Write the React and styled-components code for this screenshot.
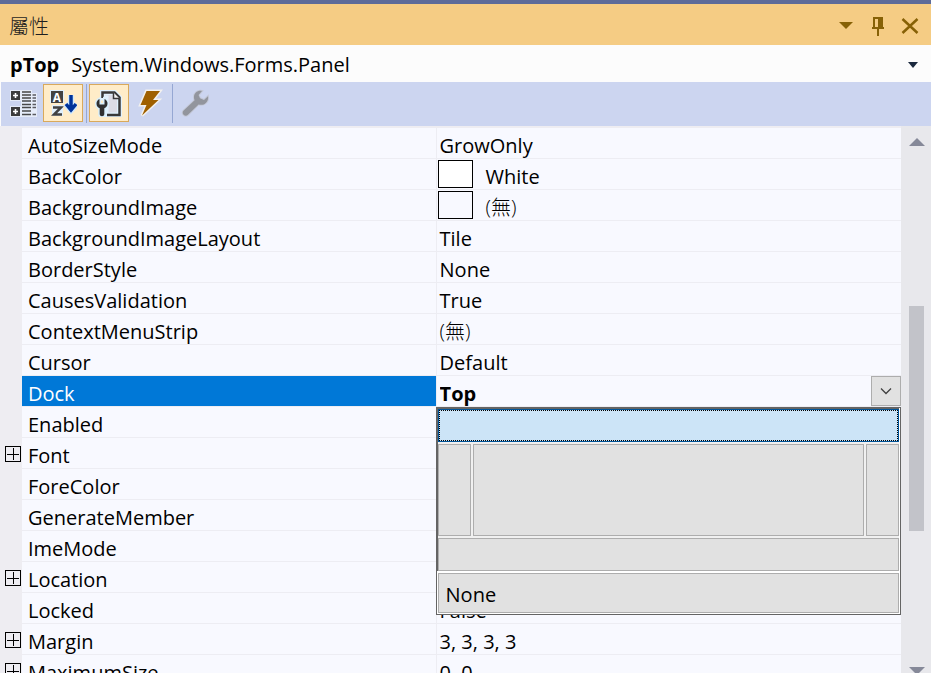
import React, { useState } from 'react';
import styled, { createGlobalStyle } from 'styled-components';

const GlobalStyle = createGlobalStyle`
  * { box-sizing: border-box; }
  body {
    margin: 0;
    overflow: hidden;
    color: #000;
    font-family: 'Open Sans', 'Noto Sans CJK TC', sans-serif;
    font-size: 20px;
    line-height: 30px;
  }
  button, input { font: inherit; color: inherit; }
`;

const Panel = styled.main`
  display: flex;
  flex-direction: column;
  height: 100vh;
  background: #fcfcfc;
  border-top: 4px solid #5d6b99;
`;

const TitleBar = styled.header`
  display: flex;
  align-items: center;
  height: 41px;
  flex: none;
  padding: 2px 9px 0;
  background: #f5cc84;
`;

const Title = styled.h1`
  flex: 1;
  margin: 0;
  padding-top: 2px;
  font-size: 20px;
  font-weight: 300;
  color: #1e1e1e;
`;

const PlainButton = styled.button`
  display: flex;
  align-items: center;
  justify-content: center;
  padding: 0;
  border: 0;
  background: transparent;
`;

const TitleButton = styled(PlainButton)`
  width: 32px;
  height: 32px;
  &:last-child { width: 24px; margin-left: 4px; }
`;

const ObjectPicker = styled(PlainButton)`
  flex: none;
  height: 37px;
  padding: 2px 13px 0 10px;
  gap: 12px;
  justify-content: flex-start;
  svg { margin-left: auto; }
`;

const Toolbar = styled.div`
  display: flex;
  align-items: center;
  flex: none;
  height: 44px;
  margin-left: 1px;
  padding: 0 2px 2px;
  background: #ccd5f0;
`;

const ToolButton = styled(PlainButton)`
  width: 40px;
  height: 38px;
  border: 1px solid ${(p) => (p['aria-pressed'] ? '#d9a95b' : 'transparent')};
  background: ${(p) => (p['aria-pressed'] ? '#ffecc8' : 'transparent')};
`;

const Separator = styled.span`
  width: 1px;
  height: 39px;
  margin: 0 2px 0 3px;
  background: #95a7d3;
`;

const Body = styled.div`
  display: flex;
  flex: 1;
  min-height: 0;
`;

const GridArea = styled.div`
  flex: 1;
  min-width: 0;
  overflow: hidden;
  padding-top: 2px;
  background: #eeedf2;
`;

const Table = styled.table`
  width: 100%;
  table-layout: fixed;
  border-collapse: separate;
  border-spacing: 0;
`;

const GutterCol = styled.col` width: 22px; `;
const NameCol = styled.col` width: 45.9%; `;

const Gutter = styled.td`
  height: 31px;
  padding: 0 2px 0 5px;
  background: #eeedf2;
`;

const Name = styled.th`
  height: 31px;
  padding: 6px 0 0 6px;
  white-space: nowrap;
  text-align: left;
  font-weight: 400;
  line-height: 24px;
  color: ${(p) => (p.$selected ? '#fff' : '#000')};
  background: ${(p) => (p.$selected ? '#0078d7' : '#f8f9ff')};
  background-clip: padding-box;
  border-bottom: 1px solid #ededf3;
`;

const Value = styled.td`
  position: relative;
  height: 31px;
  padding: 0;
  background: #f8f9ff;
  border-left: 1px solid #ededf3;
  border-bottom: 1px solid #ededf3;
`;

const ValueContent = styled.div`
  display: flex;
  height: 30px;
  padding-left: ${(p) => (p.$swatch ? '1px' : '3px')};
`;

const ValueText = styled.span`
  padding-top: 6px;
  line-height: 24px;
  font-weight: ${(p) => (p.$light ? 300 : 400)};
`;

const Swatch = styled.span`
  width: 35px;
  height: 28px;
  margin: 1px 13px 0 0;
  border: 1px solid #000;
  background: ${(p) => p.$color};
`;

const ValueInput = styled.input`
  flex: 1;
  min-width: 0;
  height: 30px;
  padding: 5px 0 0;
  border: 0;
  outline: 0;
  background: transparent;
  font-weight: 700;
  line-height: 24px;
`;

const DropButton = styled(PlainButton)`
  width: 30px;
  height: 30px;
  border: 1px solid #adadad;
  background: #e1e1e1;
`;

const Expander = styled(PlainButton)`
  width: 16px;
  height: 30px;
`;

const DockPopup = styled.div`
  position: absolute;
  z-index: 2;
  top: 100%;
  left: -1px;
  right: 0;
  margin-top: 1px;
  padding: 0 1px 1px 0;
  border: 1px solid #646464;
  background: #fff;
`;

const DockEdges = styled.div`
  display: grid;
  grid-template-columns: 33px 1fr 33px;
  grid-template-rows: 33px 92px 33px;
  gap: 2px;
  border: solid #646464;
  border-width: 1px 0 0 1px;
  background: #f0f0f0;
`;

const DockButton = styled.button`
  padding: 0;
  border: 1px solid ${(p) => (p.$active ? '#005499' : '#adadad')};
  background: ${(p) => (p.$active ? '#cce4f7' : '#e1e1e1')};
  outline: ${(p) => (p.$active ? '1px dotted #000' : 'none')};
  outline-offset: -2px;
  grid-column: ${(p) => (p.$wide ? '1 / -1' : 'auto')};
`;

const NoneButton = styled(DockButton)`
  display: block;
  width: calc(100% - 1px);
  height: 40px;
  margin: 2px 0 0 1px;
  padding: 3px 0 0 7px;
  text-align: left;
`;

const ScrollBar = styled.div`
  display: flex;
  flex-direction: column;
  align-items: center;
  width: 30px;
  padding: 12px 0 0 1px;
  overflow: hidden;
  background: #e8e8ec;
`;

const ScrollArrow = styled(PlainButton)`
  flex: none;
  align-items: flex-start;
  width: 16px;
  height: ${(p) => (p.$down ? '6px' : '8px')};
`;

const Track = styled.div` flex: ${(p) => p.$grow} 0 0; `;

const Thumb = styled(Track)`
  width: 15px;
  background: #c2c3c9;
`;

const wrenchPath =
  'M27 7.2 23 11 19 9.2 17.6 6 21 2C17 .8 12.8 4 13 8.4c0 1.2.2 1.8.6 2.8L2.6 21.6c-2.8 3 1.6 6.8 4.4 4.2L17.6 15.4c5.4 1.8 10.4-2.6 9.4-8.2Z';

const CategorizedIcon = () => (
  <svg width="28" height="28" viewBox="0 0 28 28">
    <path d="M1 1h11v11H1zM1 17h11v11H1zM12 1h11v3h5v24H12z" fill="#e6ecf9" />
    <path d="M2 2h9v9H2zM2 18h9v9H2z" fill="#3c3c3c" />
    <path d="M6.500 4v5M4 6.500h5M6.500 20v5M4 22.500h5" stroke="#fff" strokeWidth="1.600" fill="none" />
    <path
      d="M13 3h9M13 6h9M13 9h9M13 12h9M13 15.500h9M13 18.500h9M13 22h9M13 25.500h9"
      stroke="#484848"
      strokeWidth="1.600"
    />
    <path
      d="M23.500 6h3.500M23.500 9h3.500M23.500 12h3.500M23.500 15.500h3.500M23.500 18.500h3.500M23.500 25.500h3.500"
      stroke="#5a5a60"
      strokeWidth="1.600"
    />
  </svg>
);

const SortIcon = () => (
  <svg width="28" height="28" viewBox="0 0 28 28">
    <path d="M1 1h14v13H1zM3 16h11v11H3z" fill="#e0effc" />
    <path d="M2 2h12v12H2z" fill="#424242" />
    <text x="8" y="12.500" textAnchor="middle" fontFamily="Open Sans" fontSize="12" fontWeight="700" fill="#fff">A</text>
    <path d="M4 18.500h8L5 25.500h8" fill="none" stroke="#424242" strokeWidth="2.500" />
    <path d="M22 6v15M16.500 15l5.500 6 5.500-6" fill="none" stroke="#cfe9ff" strokeWidth="6" />
    <path d="M22 6v16M17 15l5 6 5-6" fill="none" stroke="#00339a" strokeWidth="3.500" />
  </svg>
);

const PageIcon = () => (
  <svg width="28" height="28" viewBox="0 0 28 28">
    <path d="M7.500 3.500H19.500l5 5V26H11V9H7.500z" fill="#dcdce6" stroke="#e0f1fd" strokeWidth="5" />
    <path d="M7.500 9V3.500H19.500l5 5V26H12" fill="none" stroke="#383838" strokeWidth="2.500" />
    <path d="M18.500 3.500v6H24.500" fill="#f5f5f5" stroke="#383838" strokeWidth="1.500" />
    <path
      d="M4.500 10C2.500 11 1.500 12.500 1.500 14.500c0 2.500 1.200 4 3.200 4.800V25c0 3 4.600 3 4.600 0v-5.700c2-.8 3.200-2.300 3.200-4.800 0-2-1-3.500-3-4.500v5.500h-5z"
      fill="#303030"
      stroke="#d9effc"
      strokeWidth="3"
      paintOrder="stroke"
    />
  </svg>
);

const EventsIcon = () => (
  <svg width="28" height="28" viewBox="0 0 28 28">
    <path
      d="M11.500 2H25l-7 9h5.500L7 26.500 11.500 16H5.500Z"
      fill="#9f6000"
      stroke="#f3f1ee"
      strokeWidth="3"
      paintOrder="stroke"
    />
  </svg>
);

const WrenchIcon = () => (
  <svg width="28" height="28" viewBox="0 0 28 28">
    <path d={wrenchPath} fill="#92959d" stroke="#c4c9d8" strokeWidth="2" paintOrder="stroke" />
  </svg>
);

const Caret = ({ width, height, color, up }) => (
  <svg width={width} height={height} viewBox="0 0 14 7" preserveAspectRatio="none">
    <path d={up ? 'M0 7 7 0l7 7Z' : 'M0 0h14L7 7Z'} fill={color} />
  </svg>
);

const PinIcon = () => (
  <svg width="12" height="20" viewBox="0 0 12 20" shapeRendering="crispEdges">
    <path d="M1 1h10v10h1v2H7v7H5v-7H0v-2h1zM3 3v8h3V3z" fill="#876106" fillRule="evenodd" />
  </svg>
);

const CloseIcon = () => (
  <svg width="18" height="16" viewBox="0 0 18 16">
    <path d="M1.500 1 16.500 15M16.500 1 1.500 15" stroke="#876106" strokeWidth="2.500" />
  </svg>
);

const ChevronIcon = () => (
  <svg width="12" height="8" viewBox="0 0 12 8">
    <path d="M1 1.500 6 6.500 11 1.500" fill="none" stroke="#404040" strokeWidth="1.300" />
  </svg>
);

const PlusBox = () => (
  <svg width="16" height="16" viewBox="0 0 16 16" shapeRendering="crispEdges">
    <path d="M.5.5h15v15H.5zM2 8.500h12M8.500 2v12" fill="none" stroke="#000" />
  </svg>
);

const properties = [
  { name: 'AutoSizeMode', value: 'GrowOnly' },
  { name: 'BackColor', value: 'White', swatch: '#fff' },
  { name: 'BackgroundImage', value: '(無)', swatch: 'transparent', light: true },
  { name: 'BackgroundImageLayout', value: 'Tile' },
  { name: 'BorderStyle', value: 'None' },
  { name: 'CausesValidation', value: 'True' },
  { name: 'ContextMenuStrip', value: '(無)', light: true },
  { name: 'Cursor', value: 'Default' },
  { name: 'Dock', editor: true },
  { name: 'Enabled' },
  { name: 'Font', expandable: true },
  { name: 'ForeColor' },
  { name: 'GenerateMember' },
  { name: 'ImeMode' },
  { name: 'Location', expandable: true },
  { name: 'Locked', value: 'False' },
  { name: 'Margin', value: '3, 3, 3, 3', expandable: true },
  { name: 'MaximumSize', value: '0, 0', expandable: true },
];

function DockEditor() {
  const [dock, setDock] = useState('Top');
  const edge = (side, wide) => (
    <DockButton
      type="button"
      aria-label={side}
      $wide={wide}
      $active={dock === side}
      onClick={() => setDock(side)}
    />
  );
  return (
    <>
      <ValueContent>
        <ValueInput aria-label="Dock" value={dock} readOnly />
        <DropButton type="button" aria-label="Dock options"><ChevronIcon /></DropButton>
      </ValueContent>
      <DockPopup>
        <DockEdges>
          {edge('Top', true)}
          {edge('Left')}
          {edge('Fill')}
          {edge('Right')}
          {edge('Bottom', true)}
        </DockEdges>
        <NoneButton type="button" $active={dock === 'None'} onClick={() => setDock('None')}>
          None
        </NoneButton>
      </DockPopup>
    </>
  );
}

function PropertyRow({ name, value, swatch, light, expandable, editor }) {
  return (
    <tr>
      <Gutter>
        {expandable && (
          <Expander type="button" aria-label={`Expand ${name}`}><PlusBox /></Expander>
        )}
      </Gutter>
      <Name scope="row" $selected={editor}>{name}</Name>
      <Value>
        {editor ? (
          <DockEditor />
        ) : (
          <ValueContent $swatch={swatch}>
            {swatch && <Swatch $color={swatch} />}
            <ValueText $light={light}>{value}</ValueText>
          </ValueContent>
        )}
      </Value>
    </tr>
  );
}

export default function App() {
  return (
    <>
      <GlobalStyle />
      <Panel>
        <TitleBar>
          <Title>屬性</Title>
          <TitleButton type="button" aria-label="Window options"><Caret width={14} height={7} color="#876106" /></TitleButton>
          <TitleButton type="button" aria-label="Auto hide"><PinIcon /></TitleButton>
          <TitleButton type="button" aria-label="Close"><CloseIcon /></TitleButton>
        </TitleBar>
        <ObjectPicker type="button">
          <strong>pTop</strong>
          <span>System.Windows.Forms.Panel</span>
          <Caret width={10} height={6} color="#1b293e" />
        </ObjectPicker>
        <Toolbar role="toolbar">
          <ToolButton type="button" aria-label="Categorized"><CategorizedIcon /></ToolButton>
          <ToolButton type="button" aria-label="Alphabetical" aria-pressed><SortIcon /></ToolButton>
          <Separator />
          <ToolButton type="button" aria-label="Properties" aria-pressed><PageIcon /></ToolButton>
          <ToolButton type="button" aria-label="Events"><EventsIcon /></ToolButton>
          <Separator />
          <ToolButton type="button" aria-label="Property pages" disabled><WrenchIcon /></ToolButton>
        </Toolbar>
        <Body>
          <GridArea>
            <Table>
              <colgroup>
                <GutterCol />
                <NameCol />
                <col />
              </colgroup>
              <tbody>
                {properties.map((p) => <PropertyRow key={p.name} {...p} />)}
              </tbody>
            </Table>
          </GridArea>
          <ScrollBar>
            <ScrollArrow type="button" aria-label="Scroll up"><Caret width={16} height={8} color="#868999" up /></ScrollArrow>
            <Track $grow={160} />
            <Thumb $grow={225} />
            <Track $grow={136} />
            <ScrollArrow type="button" aria-label="Scroll down" $down><Caret width={16} height={8} color="#868999" /></ScrollArrow>
          </ScrollBar>
        </Body>
      </Panel>
    </>
  );
}
